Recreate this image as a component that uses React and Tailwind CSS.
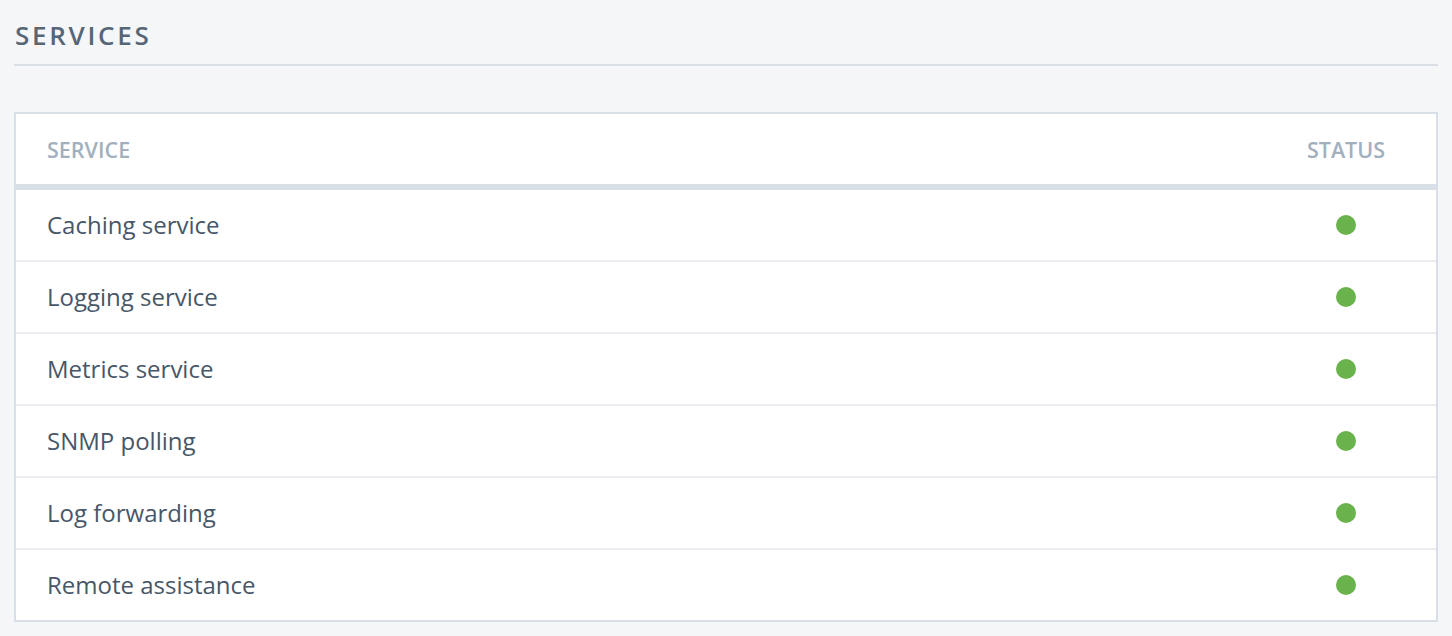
import React from "react";

const rows = [
  "Caching service",
  "Logging service",
  "Metrics service",
  "SNMP polling",
  "Log forwarding",
  "Remote assistance",
];

export default function App() {
  return (
    <div
      className="min-h-[636px] w-full bg-[#f5f6f8] px-[14px] pt-[18px]"
      style={{ fontFamily: '"Open Sans", "Liberation Sans", sans-serif' }}
    >
      <div className="border-b-2 border-[#d9dfe5] pb-[12px]">
        <h1 className="pl-[1px] text-[26px] font-semibold leading-[34px] tracking-[2.7px] text-[#566676]">
          SERVICES
        </h1>
      </div>
      <div className="mt-[46px] border-2 border-[#d8dfe6] bg-white">
        <div className="flex h-[76px] items-center border-b-[6px] border-[#d8dfe6] pl-[31px] pt-[3px] text-[21.5px] font-semibold text-[#a2b0be]">
          <div className="flex-1">SERVICE</div>
          <div className="flex w-[180px] justify-center">STATUS</div>
        </div>
        {rows.map((r, i) => (
          <div
            key={r}
            className={
              i < rows.length - 1
                ? "flex h-[72px] items-center border-b-2 border-[#e9edf1] pl-[31px] text-[24px] text-[#475768]"
                : "flex h-[70px] items-center pl-[31px] text-[24px] text-[#475768]"
            }
          >
            <div className="flex-1">{r}</div>
            <div className="flex w-[180px] justify-center">
              <span className="h-[20px] w-[20px] rounded-full bg-[#6ab24c]" />
            </div>
          </div>
        ))}
      </div>
    </div>
  );
}
